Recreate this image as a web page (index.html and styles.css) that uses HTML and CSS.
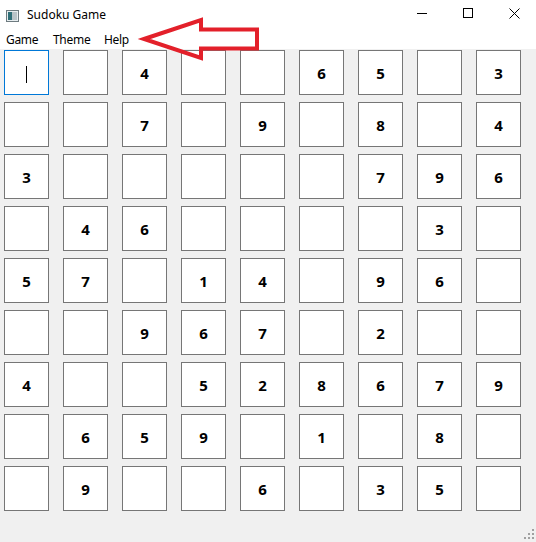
FILE: index.html
```html
<!DOCTYPE html>
<html>
<head>
<meta charset="utf-8">
<link rel="stylesheet" href="styles.css">
</head>
<body>
<div class="window">
  <div class="titlebar">
    <svg class="app-icon" width="13" height="12" viewBox="0 0 13 12">
      <rect x="0.5" y="0.5" width="12" height="11" fill="#e8eef0" stroke="#6e7b80"/>
      <rect x="2" y="2" width="4" height="8" fill="#2f6f78"/>
      <rect x="6" y="2" width="5" height="8" fill="#b9c4c8"/>
    </svg>
    <span class="title">Sudoku Game</span>
    <div class="controls">
      <div class="ctl"><svg width="10" height="10" viewBox="0 0 10 10"><line x1="0" y1="5.5" x2="10" y2="5.5" stroke="#000" stroke-width="1"/></svg></div>
      <div class="ctl"><svg width="10" height="10" viewBox="0 0 10 10"><rect x="0.5" y="0.5" width="9" height="9" fill="none" stroke="#000" stroke-width="1"/></svg></div>
      <div class="ctl"><svg width="11" height="11" viewBox="0 0 11 11"><path d="M0.5 0.5 L10.5 10.5 M10.5 0.5 L0.5 10.5" stroke="#000" stroke-width="1"/></svg></div>
    </div>
  </div>
  <div class="menubar">
    <span class="menu-item game">Game</span>
    <span class="menu-item theme">Theme</span>
    <span class="menu-item help">Help</span>
  </div>
  <div class="board">
    <div class="cell focus"><span class="caret"></span></div><div class="cell"></div><div class="cell">4</div><div class="cell"></div><div class="cell"></div><div class="cell">6</div><div class="cell">5</div><div class="cell"></div><div class="cell">3</div>
    <div class="cell"></div><div class="cell"></div><div class="cell">7</div><div class="cell"></div><div class="cell">9</div><div class="cell"></div><div class="cell">8</div><div class="cell"></div><div class="cell">4</div>
    <div class="cell">3</div><div class="cell"></div><div class="cell"></div><div class="cell"></div><div class="cell"></div><div class="cell"></div><div class="cell">7</div><div class="cell">9</div><div class="cell">6</div>
    <div class="cell"></div><div class="cell">4</div><div class="cell">6</div><div class="cell"></div><div class="cell"></div><div class="cell"></div><div class="cell"></div><div class="cell">3</div><div class="cell"></div>
    <div class="cell">5</div><div class="cell">7</div><div class="cell"></div><div class="cell">1</div><div class="cell">4</div><div class="cell"></div><div class="cell">9</div><div class="cell">6</div><div class="cell"></div>
    <div class="cell"></div><div class="cell"></div><div class="cell">9</div><div class="cell">6</div><div class="cell">7</div><div class="cell"></div><div class="cell">2</div><div class="cell"></div><div class="cell"></div>
    <div class="cell">4</div><div class="cell"></div><div class="cell"></div><div class="cell">5</div><div class="cell">2</div><div class="cell">8</div><div class="cell">6</div><div class="cell">7</div><div class="cell">9</div>
    <div class="cell"></div><div class="cell">6</div><div class="cell">5</div><div class="cell">9</div><div class="cell"></div><div class="cell">1</div><div class="cell"></div><div class="cell">8</div><div class="cell"></div>
    <div class="cell"></div><div class="cell">9</div><div class="cell"></div><div class="cell"></div><div class="cell">6</div><div class="cell"></div><div class="cell">3</div><div class="cell">5</div><div class="cell"></div>
  </div>
  <svg class="grip" width="12" height="12" viewBox="0 0 12 12">
    <rect x="9" y="1" width="2" height="2" fill="#a0a0a0"/>
    <rect x="5" y="5" width="2" height="2" fill="#a0a0a0"/>
    <rect x="9" y="5" width="2" height="2" fill="#a0a0a0"/>
    <rect x="1" y="9" width="2" height="2" fill="#a0a0a0"/>
    <rect x="5" y="9" width="2" height="2" fill="#a0a0a0"/>
    <rect x="9" y="9" width="2" height="2" fill="#a0a0a0"/>
  </svg>
  <svg class="arrow" width="270" height="70" viewBox="0 0 270 70">
    <polygon points="144,39 201,20 201,29.5 257,29.5 257,48.5 201,48.5 201,58" fill="none" stroke="#e3202a" stroke-width="4" stroke-linejoin="miter"/>
  </svg>
</div>
</body>
</html>
```
FILE: styles.css
```css
html, body {
  margin: 0;
  padding: 0;
}
body {
  width: 536px;
  height: 542px;
  overflow: hidden;
  background: #f0f0f0;
  font-family: "Noto Sans", "Liberation Sans", sans-serif;
}
.window {
  position: relative;
  width: 536px;
  height: 542px;
}
.titlebar {
  height: 30px;
  background: #ffffff;
  display: flex;
  align-items: center;
}
.app-icon {
  margin-left: 6px;
  margin-top: 1px;
}
.title {
  margin-left: 8px;
  font-size: 12px;
  color: #000;
  margin-top: -1px;
}
.controls {
  margin-left: auto;
  display: flex;
  height: 30px;
  margin-right: -1px;
}
.ctl {
  width: 46px;
  height: 30px;
  display: flex;
  align-items: center;
  justify-content: center;
}
.ctl svg {
  margin-top: -4px;
}
.menubar {
  height: 19px;
  background: #ffffff;
  display: flex;
  align-items: center;
  padding-left: 6px;
  font-size: 12px;
  letter-spacing: -0.3px;
  color: #000;
}
.menu-item.game {
  width: 47px;
}
.menu-item.theme {
  width: 51px;
}
.board {
  display: grid;
  grid-template-columns: repeat(9, 45px);
  grid-auto-rows: 45px;
  column-gap: 14px;
  row-gap: 7px;
  padding: 1px 0 0 4px;
}
.cell {
  box-sizing: border-box;
  width: 45px;
  height: 45px;
  background: #ffffff;
  border: 1px solid #767676;
  display: flex;
  align-items: center;
  justify-content: center;
  font-weight: bold;
  font-size: 15px;
  color: #000;
}
.cell.focus {
  border-color: #0078d7;
}
.caret {
  display: block;
  width: 1px;
  height: 17px;
  background: #000;
  margin-top: 4px;
  margin-left: -1px;
}
.grip {
  position: absolute;
  right: 1px;
  bottom: 2px;
}
.arrow {
  position: absolute;
  left: 0;
  top: 0;
}
```
